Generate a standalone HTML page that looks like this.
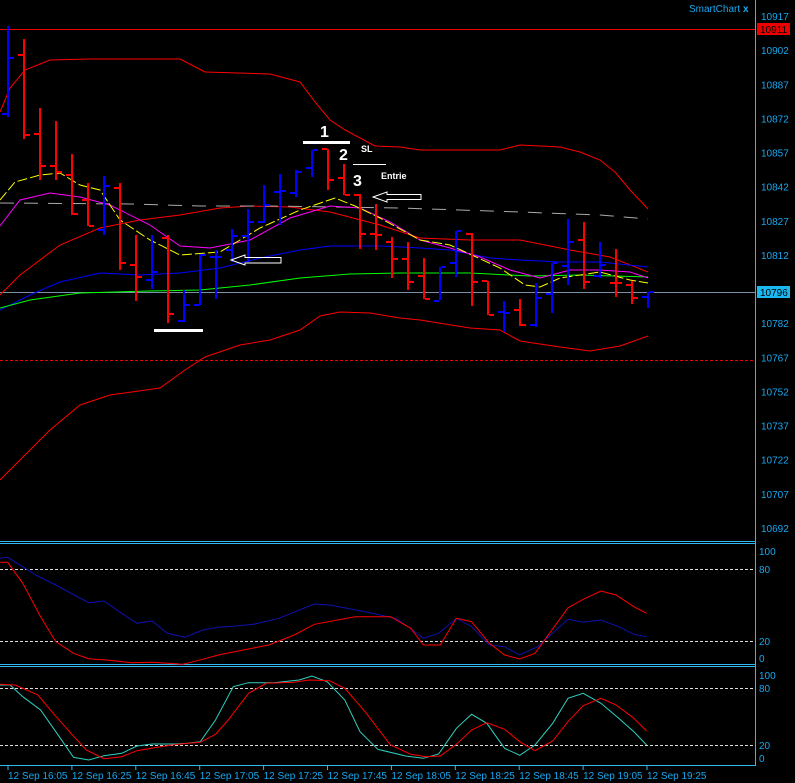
<!DOCTYPE html>
<html><head><meta charset="utf-8"><style>
html,body{margin:0;padding:0;background:#000;}
svg{display:block;font-family:"Liberation Sans",sans-serif;}
.ax{fill:#18a8f0;font-size:10px;}
</style></head><body>
<svg id="s" width="795" height="783" viewBox="0 0 795 783" xmlns="http://www.w3.org/2000/svg">
<rect width="795" height="783" fill="#000"/>
<!-- panel frames -->
<line x1="0" y1="541.5" x2="755" y2="541.5" stroke="#30b8f0" stroke-width="1"/>
<line x1="0" y1="543.5" x2="755" y2="543.5" stroke="#30b8f0" stroke-width="1"/>
<line x1="0" y1="664.5" x2="755" y2="664.5" stroke="#30b8f0" stroke-width="1"/>
<line x1="0" y1="666.5" x2="755" y2="666.5" stroke="#30b8f0" stroke-width="1"/>
<line x1="0" y1="765.5" x2="755" y2="765.5" stroke="#30b8f0" stroke-width="1"/>
<line x1="755.5" y1="0" x2="755.5" y2="766" stroke="#30b8f0" stroke-width="1"/>
<!-- horizontal ref lines -->
<line x1="0" y1="29.5" x2="755" y2="29.5" stroke="#e00" stroke-width="1"/>
<line x1="0" y1="360.5" x2="755" y2="360.5" stroke="#e00" stroke-width="1" stroke-dasharray="3,2"/>
<line x1="0" y1="292.5" x2="755" y2="292.5" stroke="#7890a8" stroke-width="1"/>
<g id="main" fill="none" stroke-width="1"></g>
<g id="bars"></g>
<!-- annotations -->
<rect x="303" y="141" width="47" height="3" fill="#fff"/>
<text x="320" y="137" fill="#fff" font-size="16" font-weight="bold">1</text>
<text x="339" y="160" fill="#fff" font-size="16" font-weight="bold">2</text>
<text x="361" y="152" fill="#fff" font-size="9" font-weight="bold">SL</text>
<rect x="353" y="164" width="33" height="1" fill="#fff"/>
<text x="353" y="186" fill="#fff" font-size="16" font-weight="bold">3</text>
<text x="381" y="179" fill="#fff" font-size="9" font-weight="bold">Entrie</text>
<rect x="154" y="329" width="49" height="3" fill="#fff"/>
<path d="M231 260 L245 255 L245 257.5 L281 257.5 L281 263 L245 263 L245 265 Z" fill="none" stroke="#fff" stroke-width="1"/>
<path d="M373 197 L387 192 L387 194.5 L421 194.5 L421 199.5 L387 199.5 L387 202 Z" fill="none" stroke="#fff" stroke-width="1"/>
<text x="689" y="12" fill="#18a8f0" font-size="10">SmartChart</text>
<text x="743" y="12" fill="#18a8f0" font-size="10" font-weight="bold">x</text>
<!-- price labels -->
<g id="pl"></g>
<rect x="757" y="23" width="33" height="12" fill="#e00"/>
<text x="760" y="33" fill="#000" font-size="10">10911</text>
<rect x="757" y="286" width="33" height="12" fill="#18b8f0"/>
<text x="760" y="296" fill="#000" font-size="10">10796</text>
<!-- sub panels -->
<line x1="0" y1="569.5" x2="755" y2="569.5" stroke="#ddd" stroke-dasharray="3,2"/>
<line x1="0" y1="641.5" x2="755" y2="641.5" stroke="#ddd" stroke-dasharray="3,2"/>
<line x1="0" y1="688.5" x2="755" y2="688.5" stroke="#ddd" stroke-dasharray="3,2"/>
<line x1="0" y1="745.5" x2="755" y2="745.5" stroke="#ddd" stroke-dasharray="3,2"/>
<text class="ax" x="759" y="555">100</text><text class="ax" x="759" y="573">80</text>
<text class="ax" x="759" y="645">20</text><text class="ax" x="759" y="662">0</text>
<text class="ax" x="759" y="679">100</text><text class="ax" x="759" y="692">80</text>
<text class="ax" x="759" y="749">20</text><text class="ax" x="759" y="762">0</text>
<g id="sub" fill="none" stroke-width="1"></g>
<g id="tl"></g>
</svg>
<script>
var NS="http://www.w3.org/2000/svg";
function el(p,t,a){var e=document.createElementNS(NS,t);for(var k in a)e.setAttribute(k,a[k]);p.appendChild(e);return e;}
function pl(g,pts,col,extra){var a={points:pts.map(function(p){return p[0]+","+p[1]}).join(" "),stroke:col,fill:"none","stroke-width":1};for(var k in extra)a[k]=extra[k];el(g,"polyline",a);}
var m=document.getElementById("main");
pl(m,[[0,112],[10,88],[25,70],[50,60],[90,59],[180,59],[205,72],[270,74],[300,82],[315,102],[330,120],[345,130],[375,146],[400,147],[420,150],[500,150],[520,145],[560,147],[580,152],[600,160],[615,172],[630,190],[648,209]],"#f00");
pl(m,[[0,480],[20,460],[50,430],[80,405],[110,395],[160,388],[185,370],[205,357],[240,345],[270,340],[300,330],[320,316],[340,312],[370,313],[400,318],[420,320],[470,328],[500,330],[520,341],[560,347],[590,351],[620,346],[648,336]],"#f00");
pl(m,[[0,295],[20,275],[60,245],[100,228],[140,220],[180,215],[220,208],[250,206],[290,207],[330,212],[380,225],[420,238],[470,240],[520,240],[570,250],[610,257],[648,272]],"#f00");
pl(m,[[0,310],[30,295],[60,282],[100,273],[140,275],[180,273],[220,268],[260,258],[300,250],[330,246],[380,246],[420,248],[450,250],[490,258],[520,260],[560,262],[600,262],[648,267]],"#00f");
pl(m,[[0,308],[30,300],[80,293],[150,291],[200,290],[250,285],[300,278],[350,274],[400,273],[470,273],[530,276],[580,275],[648,277]],"#0f0");
pl(m,[[0,203],[130,204],[200,206],[270,206],[400,208],[520,212],[600,215],[648,219]],"#aaa",{"stroke-dasharray":"14,10"});
pl(m,[[0,226],[20,200],[50,193],[80,197],[110,205],[150,225],[180,246],[210,248],[250,240],[290,218],[330,206],[360,208],[390,222],[420,240],[450,248],[480,257],[510,270],[540,278],[570,270],[600,270],[630,272],[648,278]],"#f0f");
pl(m,[[0,200],[15,182],[40,175],[60,173],[80,185],[100,190],[120,220],[150,240],[180,255],[220,252],[260,228],[300,210],[335,198],[355,206],[380,218],[420,240],[450,245],[500,268],[525,285],[540,287],[560,278],[600,272],[630,280],[648,283]],"#ff0",{"stroke-dasharray":"10,3"});
var B=[[8,26,117,114,58,"b"],[24,39,139,55,135,"r"],[40,108,180,134,166,"r"],[56,121,180,166,172,"r"],[72,154,215,175,214,"r"],[88,183,226,200,226,"r"],[104,176,235,230,186,"b"],[120,183,270,188,263,"r"],[136,235,301,265,277,"r"],[152,235,289,280,272,"b"],[168,235,323,238,314,"r"],[184,290,322,321,305,"b"],[200,254,305,305,255,"b"],[216,250,299,257,257,"b"],[232,229,262,250,236,"b"],[248,209,262,236,222,"b"],[264,185,223,222,205,"b"],[280,174,225,192,191,"b"],[296,170,197,193,172,"b"],[312,150,177,168,150,"b"],[328,149,190,149,180,"r"],[344,164,195,178,195,"r"],[360,194,249,195,234,"r"],[376,204,250,234,235,"r"],[392,237,278,242,259,"r"],[408,242,290,259,282,"r"],[424,258,299,276,299,"r"],[440,267,300,301,267,"b"],[456,231,277,263,231,"b"],[472,233,306,234,282,"r"],[488,281,315,281,315,"r"],[504,301,332,312,313,"b"],[520,299,326,310,325,"r"],[536,283,327,325,298,"b"],[552,263,313,294,263,"b"],[568,219,285,266,242,"b"],[584,222,289,240,282,"r"],[600,242,278,276,265,"b"],[616,249,297,283,283,"r"],[632,281,304,285,298,"r"],[648,292,308,297,292,"b"]];
var bg=document.getElementById("bars");
B.forEach(function(b){var c=b[5]=="b"?"#0000ff":"#ff0000";
el(bg,"rect",{x:b[0]-1,y:b[1],width:2,height:b[2]-b[1],fill:c});
el(bg,"rect",{x:b[0]-6,y:b[3]-1,width:5,height:2,fill:c});
el(bg,"rect",{x:b[0]+1,y:b[4]-1,width:5,height:2,fill:c});});
var p=document.getElementById("pl");
for(var i=0;i<16;i++){var v=10917-15*i,y=16+i*34.13;if(v==10797||v==10911)continue;
if(i==8)continue;var t=el(p,"text",{x:761,y:y+4,"class":"ax"});t.textContent=v;}
var s=document.getElementById("sub");
function sp(pts,col,oy){pl(s,pts.map(function(q){return [(q[0]/1.972).toFixed(1),(q[1]/3+oy).toFixed(1)]}),col);}
sp([[0,85],[15,82],[50,115],[70,135],[110,165],[175,218],[205,213],[240,250],[270,280],[300,273],[330,310],[365,322],[400,300],[430,292],[460,289],[500,283],[550,265],[620,222],[650,225],[720,245],[780,265],[800,285],[835,325],[865,310],[900,265],[930,290],[965,345],[995,350],[1025,375],[1060,350],[1120,268],[1150,277],[1185,270],[1220,290],[1250,313],[1275,320]],"#1010b0",530);
sp([[0,97],[15,97],[45,160],[80,260],[110,335],[145,370],[175,386],[210,390],[260,398],[300,397],[360,403],[400,388],[430,375],[480,360],[530,345],[580,315],[620,283],[700,260],[770,260],[810,295],[835,345],[868,345],[900,265],[930,275],[965,340],[995,375],[1025,387],[1055,370],[1120,233],[1150,208],[1185,183],[1215,195],[1250,230],[1275,250]],"#f00",530);
sp([[0,465],[20,465],[45,500],[80,540],[110,605],[145,682],[175,690],[205,677],[240,670],[270,648],[300,642],[345,642],[370,640],[395,635],[425,570],[460,470],[490,458],[540,458],[590,450],[615,438],[645,455],[680,510],[710,605],[745,658],[800,678],[835,685],[865,672],[900,595],[930,553],[960,580],[995,655],[1025,676],[1055,645],[1090,580],[1120,505],[1150,490],[1185,520],[1220,565],[1250,605],[1275,645]],"#30d0c0",530);
sp([[0,463],[30,465],[75,495],[105,550],[140,610],[170,660],[205,686],[240,680],[270,662],[310,652],[350,643],[395,637],[425,613],[450,570],[490,490],[525,460],[580,457],[610,450],[650,452],[680,475],[720,545],[770,645],[810,673],[840,680],[868,678],[900,643],[930,600],[960,578],[995,598],[1025,635],[1055,662],[1090,633],[1120,575],[1150,527],[1185,505],[1215,525],[1250,565],[1275,603]],"#f00",530);
var tl=document.getElementById("tl"),L=["16:05","16:25","16:45","17:05","17:25","17:45","18:05","18:25","18:45","19:05","19:25"];
L.forEach(function(l,i){var x=8+i*63.9;el(tl,"line",{x1:x,y1:765,x2:x,y2:770,stroke:"#30b8f0"});
var t=el(tl,"text",{x:x,y:779,"class":"ax"});t.textContent="12 Sep "+l;});
</script>
</body></html>
